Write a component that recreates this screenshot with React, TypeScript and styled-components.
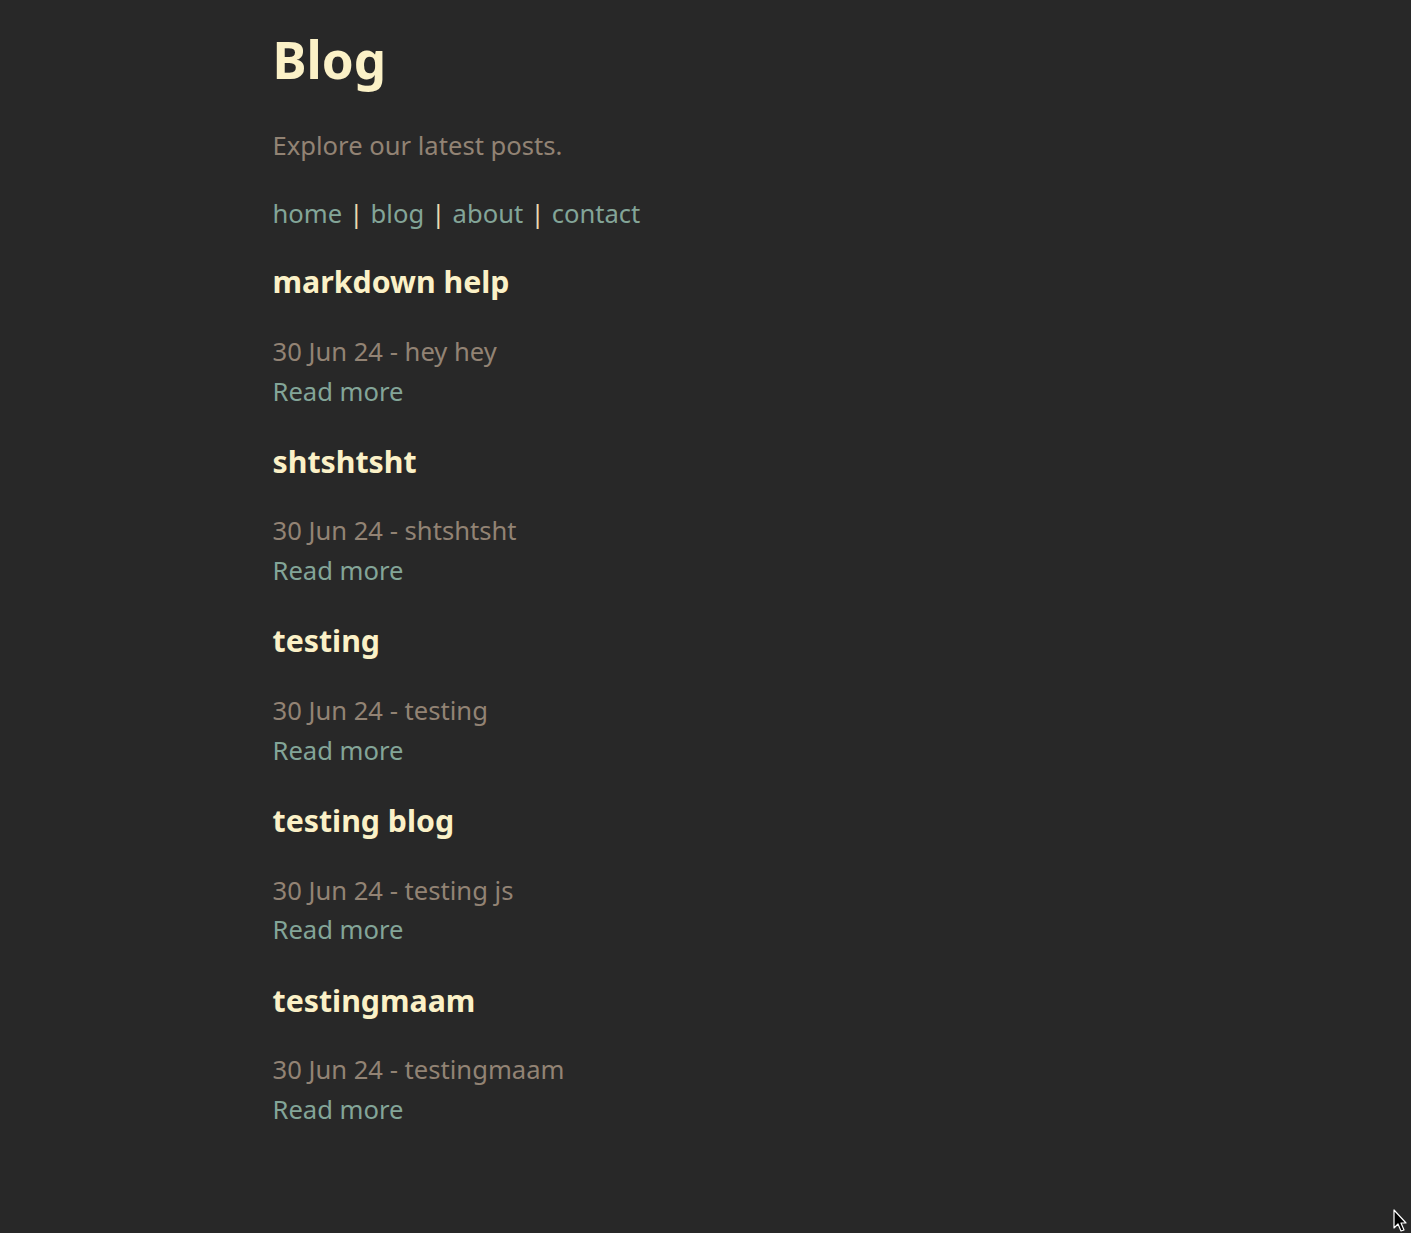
import { styled, createGlobalStyle } from "styled-components";

const GlobalStyle = createGlobalStyle`
    html, body {
        margin: 0;
        padding: 0;
        background-color: #282828;
    }

    body {
        font-family: "Noto Sans", "DejaVu Sans", sans-serif;
        font-size: 25.6px;
        line-height: 1.6;
        color: #928374;
        min-height: 1233px;
    }
`;

const StyledMain = styled.main`
    max-width: 866px;
    margin: 0 auto;
    padding-top: 29px;
    padding-bottom: 60px;
`;

const StyledTitle = styled.h1`
    font-size: 51.2px;
    line-height: 1.2;
    font-weight: 700;
    color: #fbf1c7;
    margin: 0 0 36px 0;
`;

const StyledSubtitle = styled.p`
    margin: 0 0 27px 0;
    color: #928374;
`;

const StyledNav = styled.nav`
    margin: 0 0 23px 0;
    color: #ebdbb2;
    white-space: pre;
    word-spacing: 0.5px;
`;

const StyledNavLink = styled.a`
    color: #83a598;
    text-decoration: none;
`;

const StyledPost = styled.article`
    margin-bottom: 25.25px;
`;

const StyledPostTitle = styled.h3`
    font-size: 30.3px;
    font-weight: 700;
    color: #fbf1c7;
    margin: 0 0 25px 0;
`;

const StyledSummary = styled.p`
    margin: 0;
    line-height: 1.56;
    color: #928374;
`;

const StyledReadMore = styled.a`
    display: block;
    color: #83a598;
    text-decoration: none;
`;

const StyledCursor = styled.svg`
    position: fixed;
    right: 2px;
    bottom: 0;
`;

const navItems = ["home", "blog", "about", "contact"];

const posts = [
    { title: "markdown help", date: "30 Jun 24", summary: "hey hey" },
    { title: "shtshtsht", date: "30 Jun 24", summary: "shtshtsht" },
    { title: "testing", date: "30 Jun 24", summary: "testing" },
    { title: "testing blog", date: "30 Jun 24", summary: "testing js" },
    { title: "testingmaam", date: "30 Jun 24", summary: "testingmaam" },
];

export default function App() {
    return (
        <>
            <GlobalStyle />
            <StyledMain>
                <StyledTitle>Blog</StyledTitle>
                <StyledSubtitle>Explore our latest posts.</StyledSubtitle>
                <StyledNav>
                    {navItems.map((item, i) => (
                        <span key={item}>
                            {i > 0 && " | "}
                            <StyledNavLink href="#">{item}</StyledNavLink>
                        </span>
                    ))}
                </StyledNav>
                {posts.map((post) => (
                    <StyledPost key={post.title}>
                        <StyledPostTitle>{post.title}</StyledPostTitle>
                        <StyledSummary>{post.date} - {post.summary}</StyledSummary>
                        <StyledReadMore href="#">Read more</StyledReadMore>
                    </StyledPost>
                ))}
            </StyledMain>
            {/* mouse pointer left in the screenshot */}
            <StyledCursor width="16" height="24" viewBox="0 0 16 24">
                <path d="M1 1 L1 19 L5 15 L8 22 L11 21 L8 14 L13 14 Z" fill="#000" stroke="#fff" strokeWidth="1.2" strokeLinejoin="round" />
            </StyledCursor>
        </>
    );
}
